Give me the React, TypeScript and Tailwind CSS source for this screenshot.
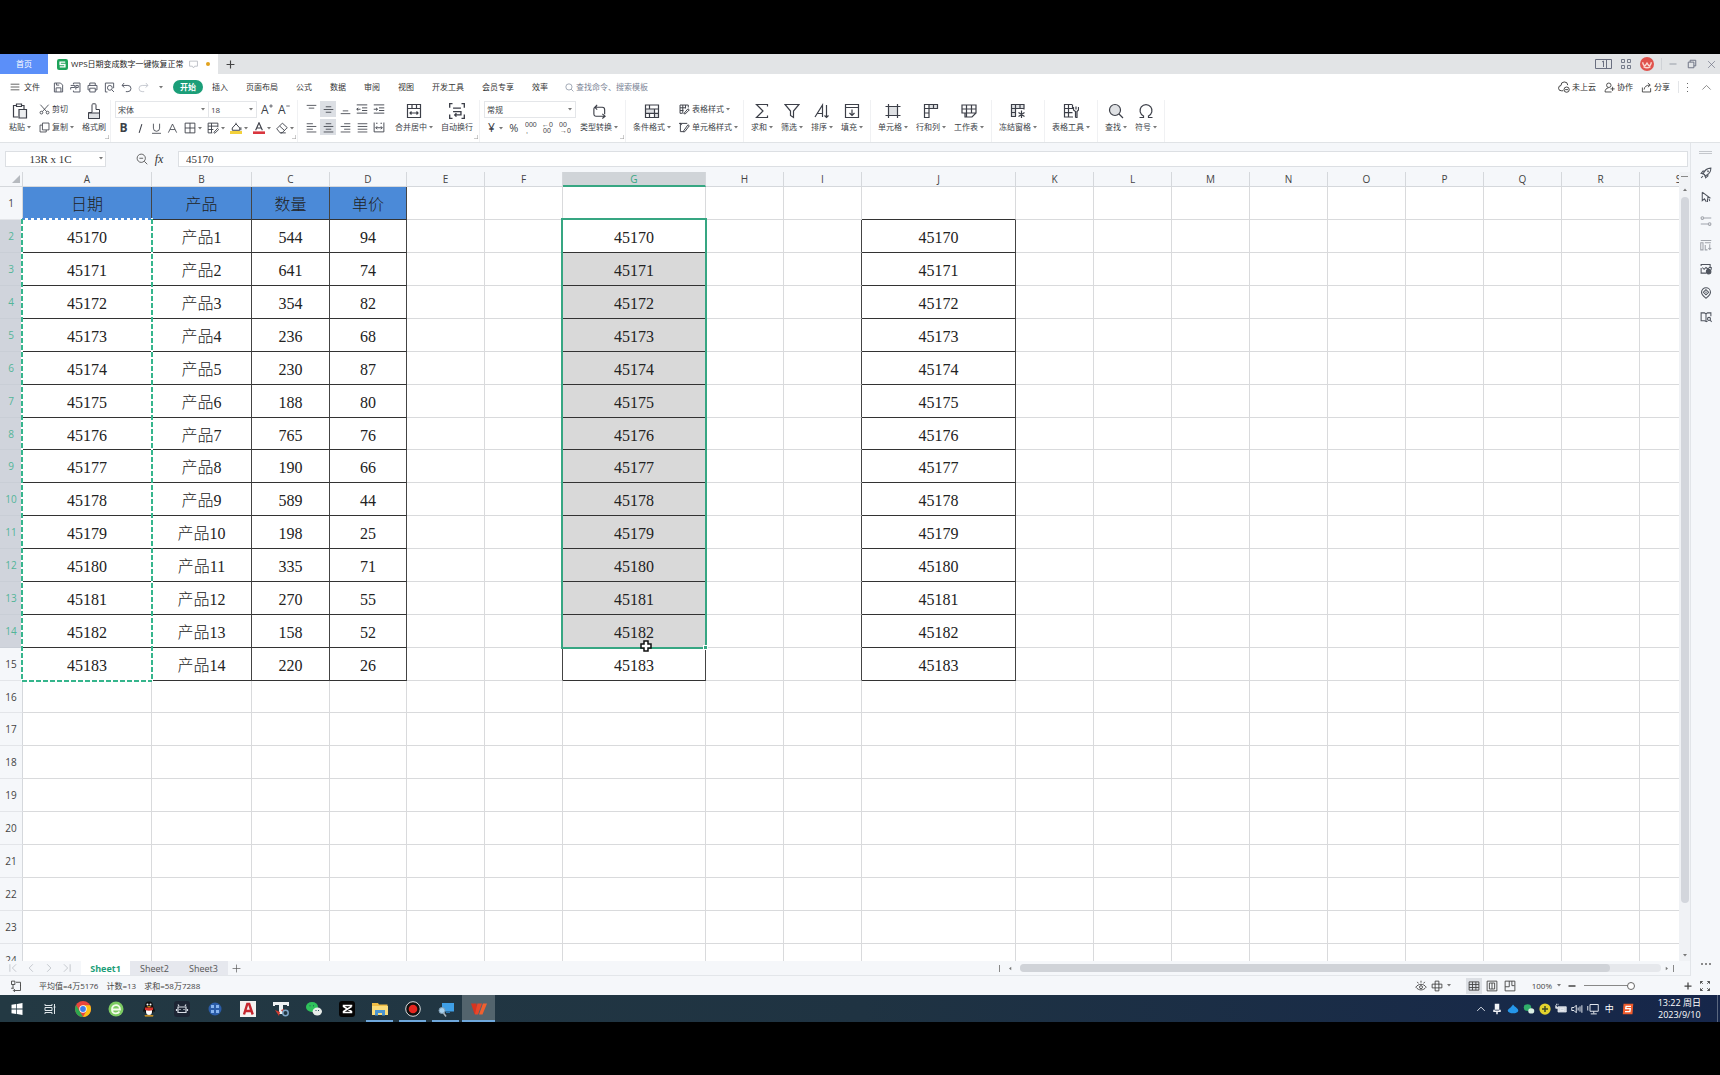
import { useState } from "react";
import type { ReactNode } from "react";

const ICONS: Record<string, string> = {
  menu: "M1 3.5h14M1 8h14M1 12.5h14",
  save: "M2 1.5h9l3 3v10H2zM4.5 14.5v-6h7v6M5 1.5v3h4",
  exportDoc: "M5 3.5V1.5h9.5v13H5v-2M1 5h6v3H1v3M8.500 11V5H12v3H8.500",
  print: "M4 5V1.5h8V5M4 11.5H1.5V5h13v6.5H12M4 9h8v5.5H4z",
  preview: "M5 14.5H2v-13h12V9M8.5 5a3.5 3.5 0 1 0 0 7 3.5 3.5 0 0 0 0-7M11 11l3.5 3.5",
  undo: "M4.500 1.500 1.500 5l3.500 3M1.500 5h8.500a4.500 4.500 0 0 1 0 9H7",
  redo: "M11.500 1.500 14.500 5 11 8M14.500 5H6a4.500 4.500 0 0 0 0 9h3",
  search: "M7 1.500a5.500 5.500 0 1 0 0 11 5.500 5.500 0 0 0 0-11M11 11l4 4",
  zoomOut: "M7 1.500a5.500 5.500 0 1 0 0 11 5.500 5.500 0 0 0 0-11M11 11l4 4M4.500 7h5",
  cut: "M2 1l9 10M14 1 5 11M3.500 10.500a2 2 0 1 0 0 4 2 2 0 0 0 0-4M12.500 10.500a2 2 0 1 0 0 4 2 2 0 0 0 0-4",
  copy: "M5 1.500h9.500v10H5zM5 4.500H1.500v10h9v-3",
  underline: "M3.500 1v6.500a4.500 4.500 0 0 0 9 0V1M1.500 15h13",
  letterA: "M2 14 8 1.500 14 14M4.500 9.500h7",
  italic: "M10 1.500 6 14.500",
  borders: "M1.500 1.500h13v13h-13zM8 1.500v13M1.500 8h13",
  cellStyle: "M14.500 7V1.500h-13v13H7M1.500 5.500h13M1.500 10h7M6 1.500v13M9 14l5-5.500 1.500 1.500-5 5z",
  alignTop: "M1 2h14M4 6h8",
  alignMid: "M4 4h8M1 8h14M4 12h8",
  alignBot: "M4 10h8M1 14h14",
  outdent: "M1 2.500h14M8 6.500h7M8 10h7M1 13.500h14M6 8.300H1M3 6.500 1 8.300l2 1.800",
  indent: "M1 2.500h14M8 6.500h7M8 10h7M1 13.500h14M1 8.300h5M4 6.500l2 1.800-2 1.800",
  left: "M1 2.500h9M1 6.500h14M1 10.500h9M1 14.500h14",
  center: "M4 2.500h8M1 6.500h14M4 10.500h8M1 14.500h14",
  right: "M6 2.500h9M1 6.500h14M6 10.500h9M1 14.500h14",
  justify: "M1 2.500h14M1 6.500h14M1 10.500h14M1 14.500h14",
  distribute: "M1.500 2v12.500h13V2M4 3h2M10 3h2M4 9h8M5.500 7 3.500 9l2 2M10.500 7l2 2-2 2",
  merge: "M1.500 1.500h13v13h-13zM1.500 5.500h13M6 1.500v4M10.500 1.500v4M4 10h8M5.500 8.500 4 10l1.500 1.500M10.500 8.500 12 10l-1.500 1.500",
  wrap: "M4 1.500H1.500V5M12 1.500h2.500V5M1.500 11v3.500H4M14.500 11v3.500H12M4.500 5.500h7M4.500 8.500h7v3H6M7.500 10 6 11.500 7.500 13",
  convert: "M2 4.500V11a2 2 0 0 0 2 2h9M5 2 2 4.500M3 3.500h8a2.500 2.500 0 0 1 2.500 2.500v5M11 10.500l3 2.500-3 2.500M5.500 1 3 3.500 5.500 6",
  condFmt: "M1.500 2h13v12.500h-13zM1.500 6h13M1.500 10.300h13M5.500 2v4M10.500 6v8.500M5.500 10.300v4.200",
  tableStyle: "M13.500 5V1.500h-12v12H5M1.500 5.500h8M1.500 9.500h5M5.500 1.500v12M9.500 1.500v5M7 14l6-7 2 1.500-6 6z",
  cellFmt: "M12 2H2v12h4M4 4.500 2 2M0 2h3M13 4l2 1.500L8.500 14 6.500 14.500 7 12.500z",
  sum: "M13.500 3.500V1.500h-11L9 8l-6.500 6.500h11v-2",
  filter: "M1 1.500h14L9.500 8v6.500l-3-2V8z",
  sort: "M1 14 8.500 2v12M3.500 10.500h5M12.500 2v12.500M10.500 12.500l2 2 2-2",
  fill: "M1.500 1.500h13v13h-13zM1.500 4.500h13M8 6.500v6M5.500 10 8 12.500l2.500-2.500",
  cells: "M3.500 1v14M12.500 1v14M.500 3.500h15M.500 12.500h15",
  rowsCols: "M1.500 1.500h13v4H6v9H1.500zM1.500 5.500H6M6 1.500v4M10.500 1.500v4M1.500 10H6",
  sheet: "M1 2h14v8l-4 4H4v-4H1zM1 6h14M5.500 2v12M10.500 2v8M4 10h11",
  freeze: "M14 6.500V1.500H1.500v12H6M1.500 5.500H14M1.500 9.500H6M5.500 1.500v12M10 1.500v4M11.500 7.500v7.500M8.500 9.500l6 4M14.500 9.500l-6 4",
  tools: "M9 1.500H1.500v12.500H10M1.500 5.500h9M1.500 9.700h8M5.500 1.500V14M9.500 1.500V6M10.500 4v3l2 1.500v6M12.500 14.500h1.500V8.500l1.500-1.500V4M13 3.500v3",
  omega: "M1.500 14.500h4v-1.500A6 6 0 1 1 10.500 13v1.500h4",
  rocket: "M6 10 4 9.500C6 4.500 9.500 1.500 14.500 1.500c0 5-3 8.500-8 10.500zM4.500 9 1.500 8.500 4 5.500h3M7 11.500 7.500 14.500l3-2.500V9M9.500 5.500h1.500V7M1.500 14.500 4 12",
  cursor: "M3 1.500v11.500l3-2.500L8.500 14.500M3 1.500l10 7.500H9.500M10 10v4.500M12 10.500l1 3",
  sliders: "M5.500 4H15M1 12h9.500M3.200 2.200a1.800 1.800 0 1 0 0 3.600 1.800 1.800 0 0 0 0-3.600M12.800 10.200a1.800 1.800 0 1 0 0 3.600 1.800 1.800 0 0 0 0-3.600",
  panel: "M1 2h14M1 5h3v9.500H1zM6.500 5h8M7 8v6.500h3M13 7v7M11 12l2 2 2-2",
  picTool: "M8 13.500H1.500V6.500M1.500 4V2h12v4M3 6l2.500 2.500L8 6l2.500 2 2-2h2.500v3",
  pin: "M8 1a6 6 0 0 1 6 6c0 3.500-3 5.500-6 8-3-2.500-6-4.500-6-8A6 6 0 0 1 8 1M8 3.500 4.500 7 8 10.500 11.500 7zM8 6v2",
  book: "M1.500 2.500H6l2 1.500v10l-2-1H1.500zM8 4l2-1.500h4.500V7M8 14h2M12 8.500a2 2 0 1 0 0 4 2 2 0 0 0 0-4M13.500 12l2 2.500",
  cloud: "M7 13H4.500A3.500 3.500 0 0 1 4 6a4.500 4.500 0 0 1 9-.500M11.500 8a3.500 3.500 0 1 0 0 7 3.500 3.500 0 0 0 0-7M9.500 11.500h4",
  person: "M7 1.500a3 3 0 1 0 0 6.500 3 3 0 0 0 0-6.500M1.500 14.500c0-3.500 2-5.500 5-6M1.500 14.500H11M12.500 7v6M9.500 10h6",
  share: "M2 8v6.500h12V9M4.500 11C5 7 7.500 4.500 13 4.500M10 1.500l3.500 3-3.500 3",
  up: "M2 11l6-6 6 6",
  first: "M3 2v12M13 2 7 8l6 6",
  prev: "M11 2 5 8l6 6",
  next: "M5 2l6 6-6 6",
  last: "M13 2v12M3 2l6 6-6 6",
  plus: "M8 1v14M1 8h14",
  minus: "M1 8h14",
  close: "M2 2l12 12M14 2 2 14",
  restore: "M2 5h9v9H2zM5 5V2h9v9h-3",
  refresh: "M8 3h6v5M14 7v7H5M6.500 12 4.500 14l2 2M2 1.500h4.500V6H2zM4 6v5M1.500 11H5",
  eye: "M1 9.500c4-5 10-5 14 0-4 5-10 5-14 0M8 7.500a2 2 0 1 0 0 4 2 2 0 0 0 0-4M8 1v2.500M3 2.500l1.500 2M13 2.500l-1.500 2",
  cross: "M5.500 1.500h5v13h-5zM1.500 5.500h13v5h-13z",
  gridView: "M1.500 2.500h13v11h-13zM1.500 6h13M1.500 10h13M6 2.500v11M10.500 2.500v11",
  pageView: "M1.500 1.500h13v13h-13zM4.500 4h7v8h-7zM8 4v8",
  readView: "M1.500 1.500h13v13h-13zM7 1.500V9H1.500M10.500 1.500v6H14",
  full: "M2 5V2h3M2 2l3 3M11 2h3v3M14 2l-3 3M2 11v3h3M2 14l3-3M14 11v3h-3M14 14l-3-3",
  apps: "M2 2h4v4H2zM10 2h4v4h-4zM2 10h4v4H2zM10 10h4v4h-4z",
};

function Icon({ name, className = "size-[14px]", w = 1.2, children }: { name: string; className?: string; w?: number; children?: ReactNode }) {
  return (
    <svg viewBox="0 0 16 16" className={`shrink-0 ${className}`} fill="none" stroke="currentColor" strokeWidth={w} aria-hidden="true">
      {children}
      <path d={ICONS[name]} />
    </svg>
  );
}

function Caret({ className = "" }: { className?: string }) {
  return (
    <svg viewBox="0 0 4 3" className={`h-[3px] w-1 shrink-0 text-[#777] ${className}`} aria-hidden="true">
      <path d="M0 0h4L2 2.500z" fill="currentColor" />
    </svg>
  );
}

function Big({ label, caret = true, children }: { label: string; caret?: boolean; children: ReactNode }) {
  return (
    <button className="flex shrink-0 flex-col items-center gap-[2px] pt-[2px]">
      <span className="flex h-4 items-center">{children}</span>
      <span className="flex items-center gap-[2px] leading-3">
        {label}
        {caret && <Caret />}
      </span>
    </button>
  );
}

function Small({ label, caret = false, children }: { label: string; caret?: boolean; children: ReactNode }) {
  return (
    <button className="flex h-4 items-center gap-[2px]">
      {children}
      <span>{label}</span>
      {caret && <Caret />}
    </button>
  );
}

function Tool({ label, on = false, children }: { label: string; on?: boolean; children: ReactNode }) {
  return (
    <button aria-label={label} className={`flex size-4 items-center justify-center ${on ? "bg-[#dcdfe4]" : ""}`}>
      {children}
    </button>
  );
}

function Group({ children, corner = false, className = "gap-2 px-[7px]" }: { children: ReactNode; corner?: boolean; className?: string }) {
  return (
    <div className={`relative flex shrink-0 items-start border-r border-[#f0f1f3] pt-px ${className}`}>
      {children}
      {corner && (
        <svg viewBox="0 0 4 4" className="absolute bottom-[3px] right-px size-1 text-[#999]" aria-hidden="true">
          <path d="M4 0v4H0" fill="none" stroke="currentColor" />
        </svg>
      )}
    </div>
  );
}

const tabs = ["插入", "页面布局", "公式", "数据", "审阅", "视图", "开发工具", "会员专享", "效率"];

function TitleBar() {
  return (
    <header className="flex h-5 shrink-0 items-stretch bg-[#e2e4e6]">
      <button className="w-12 bg-[#5b8ff9] text-white">首页</button>
      <div className="flex items-center bg-white pl-[9px] pr-2">
        <svg viewBox="0 0 16 16" className="mr-[3px] size-[11px]" aria-hidden="true">
          <rect width="16" height="16" rx="3" fill="#1ea35a" />
          <path d="M12 4.500H4.500V8h7v3.500H4" fill="none" stroke="#fff" strokeWidth="2" />
        </svg>
        <span className="text-[#222]">WPS日期变成数字一键恢复正常</span>
        <svg viewBox="0 0 16 16" className="ml-[5px] size-[9px] text-[#b5b9c0]" fill="none" stroke="currentColor" strokeWidth="1.5" aria-hidden="true">
          <path d="M1 2h14v9h-5l-2 3-2-3H1z" />
        </svg>
        <span className="ml-2 size-1 rounded-full bg-[#e2a21d]" />
      </div>
      <button aria-label="新建标签" className="ml-2 flex items-center text-[#444]">
        <Icon name="plus" className="size-[9px]" w={2} />
      </button>
      <div className="ml-auto flex items-center pr-1 text-[#6a6f80]">
        <svg viewBox="0 0 17 10" className="h-[10px] w-[17px]" fill="none" stroke="currentColor" aria-hidden="true">
          <path d="M.5.5h16v9H.5zM11.500.5v9M7 3l1.500-1v6" />
        </svg>
        <Icon name="apps" className="ml-2 size-3" />
        <svg viewBox="0 0 16 16" className="ml-2 size-[14px]" aria-hidden="true">
          <circle cx="8" cy="8" r="8" fill="#e0524c" />
          <path d="M3 6c1 5 3 5 5 1 2 4 4 4 5-1M4 11c3 2 5 2 8 0" fill="none" stroke="#fbd9d2" strokeWidth="1.500" />
        </svg>
        <span className="mx-[7px] h-3 w-px bg-[#cfd2d6]" />
        <button aria-label="最小化"><Icon name="minus" className="size-2" /></button>
        <button aria-label="还原" className="ml-[10px]"><Icon name="restore" className="size-[10px]" w={1.5} /></button>
        <button aria-label="关闭" className="ml-[10px]"><Icon name="close" className="size-[9px]" /></button>
      </div>
    </header>
  );
}

function MenuBar() {
  return (
    <nav className="flex h-[26px] shrink-0 items-center bg-white text-[#333]">
      <button className="ml-[10px] flex items-center gap-1">
        <Icon name="menu" className="size-[10px]" />
        文件
      </button>
      <div className="ml-[13px] flex items-center gap-[6px] text-[#555a66]">
        {[["save", "保存"], ["exportDoc", "输出为PDF"], ["print", "打印"], ["preview", "打印预览"], ["undo", "撤销"]].map(([n, l]) => (
          <button key={n} aria-label={l}><Icon name={n} className="size-[11px]" w={1.4} /></button>
        ))}
        <button aria-label="恢复" className="text-[#c5c8cf]"><Icon name="redo" className="size-[11px]" w={1.4} /></button>
        <Caret className="ml-1" />
      </div>
      <button className="ml-[10px] h-[14px] w-[30px] rounded-full bg-[#1b9e78] font-bold text-white">开始</button>
      <div className="ml-[9px] flex gap-[18px]">
        {tabs.map((t) => (
          <button key={t}>{t}</button>
        ))}
      </div>
      <label className="ml-[17px] flex items-center gap-[2px] text-[#7b8496]">
        <Icon name="search" className="size-[9px]" />
        <input aria-label="搜索" placeholder="查找命令、搜索模板" className="w-20 outline-none placeholder:text-[#7b8496]" />
      </label>
      <div className="ml-auto flex items-center gap-2 pr-2">
        <Small label="未上云"><Icon name="cloud" className="size-3" /></Small>
        <Small label="协作"><Icon name="person" className="size-[11px]" /></Small>
        <Small label="分享"><Icon name="share" className="size-[11px]" /></Small>
        <span className="h-3 w-px bg-[#e3e5e8]" />
        <svg viewBox="0 0 2 9" className="h-[9px] w-[2px]" fill="#666" aria-hidden="true">
          <path d="M0 0h1v1H0zM0 4h1v1H0zM0 8h1v1H0z" />
        </svg>
        <button aria-label="收起功能区" className="ml-1 text-[#777]"><Icon name="up" className="size-[11px]" /></button>
      </div>
    </nav>
  );
}

function Picker({ label, value, className }: { label: string; value: string; className: string }) {
  return (
    <div className={`relative h-[17px] border border-[#e4e6e9] ${className}`}>
      <select aria-label={label} className="block size-full appearance-none bg-white pl-[2px] outline-none">
        <option>{value}</option>
      </select>
      <Caret className="absolute right-[3px] top-[6px]" />
    </div>
  );
}

function Decimal({ top, bottom }: { top: string; bottom: string }) {
  return (
    <svg viewBox="0 0 12 12" className="size-3" fontSize="7" fontFamily="Liberation Sans" fill="#444" aria-hidden="true">
      <text x="0" y="5">{top}</text>
      <text x="1" y="11">{bottom}</text>
    </svg>
  );
}

function Ribbon() {
  return (
    <div className="flex h-[43px] shrink-0 overflow-hidden border-b border-[#e0e3e6] bg-white text-[#3c3f48]">
      <Group corner className="gap-2 pl-[9px] pr-1">
        <Big label="粘贴">
          <svg viewBox="0 0 16 16" className="size-4" fill="none" stroke="currentColor" strokeWidth="1.200" aria-hidden="true">
            <path d="M6 14H1.500V2.500h3M10 2.500h2V6M4.500 1h5v2.500h-5z" />
            <path d="M7 6.500h7.500v8.500H7z" fill="#eceef0" />
          </svg>
        </Big>
        <div className="flex flex-col gap-[2px]">
          <Small label="剪切"><Icon name="cut" className="size-[11px]" /></Small>
          <Small label="复制" caret><Icon name="copy" className="size-[11px]" /></Small>
        </div>
        <Big label="格式刷" caret={false}>
          <svg viewBox="0 0 16 16" className="size-4" fill="none" stroke="currentColor" aria-hidden="true">
            <path d="M2.500 10h11v5.500h-11z" fill="#dfe1e4" />
            <path d="M6 9.500v-8c0-1 4-1 4 0v5h3.500v9h-11V9.500H6" />
          </svg>
        </Big>
      </Group>
      <Group corner className="pl-1 pr-[3px]">
        <div className="flex flex-col gap-[2px]">
          <div className="flex items-center">
            <Picker label="字体" value="宋体" className="w-[94px]" />
            <Picker label="字号" value="18" className="w-12 border-l-0" />
            <div className="ml-1 flex gap-1 text-[12px] leading-4">
              <button aria-label="增大字号" className="flex w-[13px] items-center">
                A<Icon name="plus" className="mb-2 size-1" w={3} />
              </button>
              <button aria-label="减小字号" className="flex w-[13px] items-center">
                A<Icon name="minus" className="mb-2 size-1" w={3} />
              </button>
            </div>
          </div>
          <div className="flex h-4 items-center">
            <button className="w-[17px] text-[12px] font-bold">B</button>
            <Tool label="倾斜"><Icon name="italic" className="size-[11px]" w={1.5} /></Tool>
            <Tool label="下划线"><Icon name="underline" className="size-[11px]" /></Tool>
            <Tool label="删除线"><Icon name="letterA" className="size-[11px]" /></Tool>
            <div className="ml-1 flex gap-[5px]">
              <button aria-label="边框" className="flex items-center gap-[2px]"><Icon name="borders" className="size-3" /><Caret /></button>
              <button aria-label="单元格样式" className="flex items-center gap-[2px]"><Icon name="cellStyle" className="size-3" /><Caret /></button>
              <button aria-label="填充颜色" className="flex items-center gap-[2px]">
                <svg viewBox="0 0 16 16" className="size-3" fill="none" stroke="currentColor" strokeWidth="1.300" aria-hidden="true">
                  <path d="M3 8 8 2.500 13 8v3H3zM8 2.500V1M14.500 7v4" />
                  <path d="M0 12h16v4H0z" fill="#f3d13b" stroke="none" />
                </svg>
                <Caret />
              </button>
              <button aria-label="字体颜色" className="flex items-center gap-[2px]">
                <svg viewBox="0 0 16 16" className="size-3" fill="none" stroke="currentColor" strokeWidth="1.500" aria-hidden="true">
                  <path d="M3.500 11 8 1l4.500 10M5 8h6" />
                  <path d="M0 12.500h16V16H0z" fill="#d9363e" stroke="none" />
                </svg>
                <Caret />
              </button>
              <button aria-label="清除" className="flex items-center gap-[2px]">
                <svg viewBox="0 0 16 16" className="size-3" fill="none" stroke="currentColor" strokeWidth="1.200" aria-hidden="true">
                  <path d="M1 9 8.500 1.500 15 7.500 8 14.500H5.500zM5 5.500l6.500 6M6 14.500h7" />
                </svg>
                <Caret />
              </button>
            </div>
          </div>
        </div>
      </Group>
      <Group corner className="gap-2 pl-[5px] pr-[6px]">
        <div className="grid grid-cols-5 gap-x-px gap-y-[2px]">
          <Tool label="顶端对齐"><Icon name="alignTop" className="size-[11px]" /></Tool>
          <Tool label="垂直居中" on><Icon name="alignMid" className="size-[11px]" /></Tool>
          <Tool label="底端对齐"><Icon name="alignBot" className="size-[11px]" /></Tool>
          <Tool label="减少缩进"><Icon name="outdent" className="size-3" /></Tool>
          <Tool label="增加缩进"><Icon name="indent" className="size-3" /></Tool>
          <Tool label="左对齐"><Icon name="left" className="size-[11px]" /></Tool>
          <Tool label="水平居中" on><Icon name="center" className="size-[11px]" /></Tool>
          <Tool label="右对齐"><Icon name="right" className="size-[11px]" /></Tool>
          <Tool label="两端对齐"><Icon name="justify" className="size-[11px]" /></Tool>
          <Tool label="分散对齐"><Icon name="distribute" className="size-3" /></Tool>
        </div>
        <Big label="合并居中"><Icon name="merge" className="size-4" /></Big>
        <Big label="自动换行" caret={false}><Icon name="wrap" className="size-[18px]" /></Big>
      </Group>
      <Group corner className="gap-1 pl-1 pr-[7px]">
        <div className="flex flex-col gap-[2px]">
          <Picker label="数字格式" value="常规" className="w-[92px]" />
          <div className="flex h-4 items-center gap-[5px] pl-1">
            <button className="flex items-center gap-1 text-[12px]">¥<Caret /></button>
            <button className="w-3 text-[11px]">%</button>
            <button aria-label="千位分隔"><Decimal top="000" bottom=" ," /></button>
            <button aria-label="增加小数位"><Decimal top="←0" bottom="00" /></button>
            <button aria-label="减少小数位"><Decimal top="00" bottom="→0" /></button>
          </div>
        </div>
        <Big label="类型转换"><Icon name="convert" className="size-[15px]" /></Big>
      </Group>
      <Group className="gap-2 pl-[7px] pr-[5px]">
        <Big label="条件格式">
          <Icon name="condFmt" className="size-4"><path d="M1.500 6h9v4.300h-9zM10.500 10.300h4v4.200h-4z" fill="#dfe1e4" stroke="none" /></Icon>
        </Big>
        <div className="flex flex-col gap-[2px]">
          <Small label="表格样式" caret><Icon name="tableStyle" className="size-[11px]" w={1.4} /></Small>
          <Small label="单元格样式" caret><Icon name="cellFmt" className="size-[11px]" w={1.4} /></Small>
        </div>
      </Group>
      <Group>
        <Big label="求和"><Icon name="sum" className="size-4" /></Big>
        <Big label="筛选"><Icon name="filter" className="size-4" /></Big>
        <Big label="排序"><Icon name="sort" className="size-4" /></Big>
        <Big label="填充"><Icon name="fill" className="size-4" /></Big>
      </Group>
      <Group>
        <Big label="单元格"><Icon name="cells" className="size-4"><path d="M3.500 3.500h9v9h-9z" fill="#dfe1e4" stroke="none" /></Icon></Big>
        <Big label="行和列"><Icon name="rowsCols" className="size-4"><path d="M6 1.500h8.500v4H6z" fill="#dfe1e4" stroke="none" /></Icon></Big>
        <Big label="工作表"><Icon name="sheet" className="size-4" /></Big>
      </Group>
      <Group>
        <Big label="冻结窗格"><Icon name="freeze" className="size-4"><path d="M1.500 1.500H14v4H5.500v8h-4z" fill="#dfe1e4" stroke="none" /></Icon></Big>
      </Group>
      <Group>
        <Big label="表格工具"><Icon name="tools" className="size-4" /></Big>
      </Group>
      <Group>
        <Big label="查找"><Icon name="search" className="size-4"><circle cx="7" cy="7" r="5" fill="#dfe1e4" stroke="none" /></Icon></Big>
        <Big label="符号"><Icon name="omega" className="size-4" /></Big>
      </Group>
    </div>
  );
}

function FormulaBar() {
  return (
    <div className="flex shrink-0 items-center pb-[5px] pr-[2px] pt-2 font-['Liberation_Serif',serif] text-[11px] text-[#333]">
      <div className="relative ml-[5px] h-4 w-[101px] border border-[#dcdfe3] bg-white">
        <input aria-label="名称框" defaultValue="13R x 1C" className="block h-full w-full pr-[10px] text-center outline-none" />
        <Caret className="absolute right-[2px] top-[5px]" />
      </div>
      <Icon name="zoomOut" className="ml-[30px] size-3 text-[#555]" />
      <span className="mr-2 w-[22px] text-center text-[12px] leading-4 italic">fx</span>
      <input aria-label="编辑栏" defaultValue="45170" className="h-4 min-w-0 flex-1 border border-[#dcdfe3] bg-white pl-[7px] outline-none" />
    </div>
  );
}

const columns = [
  ["A", "w-[129px]"], ["B", "w-[100px]"], ["C", "w-[78px]"], ["D", "w-[77px]"], ["E", "w-[78px]"],
  ["F", "w-[78px]"], ["G", "w-[143px]"], ["H", "w-[78px]"], ["I", "w-[78px]"], ["J", "w-[154px]"],
  ["K", "w-[78px]"], ["L", "w-[78px]"], ["M", "w-[78px]"], ["N", "w-[78px]"], ["O", "w-[78px]"],
  ["P", "w-[78px]"], ["Q", "w-[78px]"], ["R", "w-[78px]"], ["S", "w-[78px]"],
];

const qty = [544, 641, 354, 236, 230, 188, 765, 190, 589, 198, 335, 270, 158, 220];
const price = [94, 74, 82, 68, 87, 80, 76, 66, 44, 25, 71, 55, 52, 26];
const titles: Record<string, string> = { A: "日期", B: "产品", C: "数量", D: "单价" };

function cellText(col: string, row: number) {
  if (row === 1) return titles[col] ?? "";
  if (row > 15) return "";
  const i = row - 2;
  if (col === "A" || col === "G" || col === "J") return String(45170 + i);
  if (col === "B") return `产品${i + 1}`;
  if (col === "C") return String(qty[i]);
  if (col === "D") return String(price[i]);
  return "";
}

function cellClass(col: string, row: number) {
  const inTable = "ABCD".includes(col);
  const body = row >= 2 && row <= 15;
  const darkRight = (inTable && row <= 15) || ("FGIJ".includes(col) && body);
  const darkBottom = row <= 15 && (inTable || col === "G" || col === "J");
  let bg = "bg-white";
  if (row === 1 && inTable) bg = "bg-[#4b8ad8]";
  if (col === "G" && row >= 3 && row <= 14) bg = "bg-[#d9d9d9]";
  return `${bg} ${darkRight ? "border-r-[#444]" : "border-r-[#d9dadc]"} ${darkBottom ? "border-b-[#333]" : "border-b-[#d9dadc]"}`;
}

// moving border round the copied range A2:A15
function Marching() {
  return (
    <svg className="pointer-events-none absolute -left-px -top-px z-10 h-[462px] w-[calc(100%+2px)] overflow-visible" aria-hidden="true">
      <rect width="100%" height="100%" fill="none" stroke="#fff" strokeWidth="2" />
      <line x1="0" y1="0" x2="100%" y2="0" stroke="#4b8ad8" strokeWidth="2" strokeDasharray="3 3" />
      <line x1="0" y1="0" x2="0" y2="100%" stroke="#35b58c" strokeWidth="2" strokeDasharray="5 2" />
      <line x1="100%" y1="0" x2="100%" y2="100%" stroke="#35b58c" strokeWidth="2" strokeDasharray="5 2" />
      <line x1="0" y1="100%" x2="100%" y2="100%" stroke="#35b58c" strokeWidth="2" strokeDasharray="5 2" />
    </svg>
  );
}

function Selection() {
  return (
    <div className="pointer-events-none absolute -left-[2px] -top-[2px] z-10 h-[431px] w-[calc(100%+4px)] border-2 border-[#36a682]">
      <span className="absolute -bottom-[3px] -right-[3px] size-[5px] border border-white bg-[#36a682]" />
      <svg viewBox="0 0 12 12" className="absolute -bottom-[5px] left-[77px] size-3" aria-hidden="true">
        <path d="M4 1h4v3h3v4H8v3H4V8H1V4h3z" fill="#fff" stroke="#111" strokeWidth="1.500" />
      </svg>
    </div>
  );
}

function Grid() {
  const rows = Array.from({ length: 24 }, (_, i) => i + 1);
  return (
    <div className="min-w-0 flex-1 overflow-hidden">
      <table className="w-full table-fixed border-separate border-spacing-0 text-center">
        <thead>
          <tr className="h-[15px]">
            <th className="w-[23px] border-b border-r border-[#d5d8dc] p-0">
              <svg viewBox="0 0 8 8" className="ml-auto mr-[2px] size-2" aria-hidden="true">
                <path d="M8 0v8H0z" fill="#b6babf" />
              </svg>
            </th>
            {columns.map(([c, w]) => (
              <th
                key={c}
                className={`${w} border-r border-r-[#d5d8dc] p-0 text-[10px] leading-3 font-normal ${
                  c === "G" ? "border-b-2 border-b-[#36a682] bg-[#d0d4d8] text-[#36a682]" : "border-b border-b-[#d5d8dc] text-[#444]"
                }`}
              >
                {c}
              </th>
            ))}
          </tr>
        </thead>
        <tbody>
          {rows.map((r) => (
            <tr key={r} className={r % 8 === 0 ? "h-8" : "h-[33px]"}>
              <th
                className={`border-b border-r p-0 text-[10px] leading-3 font-normal ${
                  r >= 2 && r <= 14
                    ? "border-b-[#c9ced6] border-r-[#36a682] bg-[#d0d4dc] text-[#53b598]"
                    : "border-b-[#e3e5e9] border-r-[#d5d8dc] text-[#444]"
                }`}
              >
                {r}
              </th>
              {columns.map(([c]) => (
                <td
                  key={c}
                  className={`relative border-b border-r p-0 pt-1 font-['Liberation_Serif','Noto_Sans_CJK_SC',serif] text-[16px] leading-5 font-light text-[#222] ${cellClass(c, r)}`}
                >
                  {cellText(c, r)}
                  {c === "A" && r === 2 && <Marching />}
                  {c === "G" && r === 2 && <Selection />}
                </td>
              ))}
            </tr>
          ))}
        </tbody>
      </table>
    </div>
  );
}

function VScroll() {
  return (
    <div className="flex w-[11px] shrink-0 flex-col items-center bg-[#f0f2f5]">
      <span className="mt-1 h-px w-[7px] bg-[#888]" />
      <Caret className="mt-[11px] rotate-180" />
      <div className="mt-[6px] w-2 flex-1 rounded-full bg-[#d3d6dc]" />
      <Caret className="mb-1 mt-[51px]" />
    </div>
  );
}

function SheetBar() {
  const [active, setActive] = useState("Sheet1");
  return (
    <div className="flex h-[15px] shrink-0 items-center border-b border-[#e3e6ea] text-[9px]">
      <div className="flex w-[81px] items-center gap-2 pl-2 text-[#b4b8bf]">
        {["first", "prev", "next", "last"].map((n) => (
          <button key={n} aria-label={n}><Icon name={n} className="size-[10px]" /></button>
        ))}
      </div>
      {["Sheet1", "Sheet2", "Sheet3"].map((s) => (
        <button
          key={s}
          onClick={() => setActive(s)}
          className={`h-full w-[49px] pt-px leading-3 ${s === active ? "bg-white font-bold text-[#1b9e78]" : "bg-[#e6e8ee] text-[#555]"}`}
        >
          {s}
        </button>
      ))}
      <button aria-label="新建工作表" className="ml-1 text-[#555]"><Icon name="plus" className="size-[9px]" /></button>
      <div className="ml-auto flex w-[41%] items-center pl-[2px] pr-4">
        <span className="h-[7px] w-px bg-[#888]" />
        <Caret className="mx-2 rotate-90" />
        <div className="flex h-2 flex-1 items-center rounded-full bg-[#e6e8ec]">
          <div className="h-full w-[92%] rounded-full bg-[#d0d3d8]" />
        </div>
        <Caret className="mx-1 -rotate-90" />
        <span className="h-[7px] w-px bg-[#888]" />
      </div>
    </div>
  );
}

function SideBar() {
  const items = [["rocket", "工具"], ["cursor", "选择"], ["sliders", "属性"], ["panel", "透视表"], ["picTool", "图片"], ["pin", "定位"], ["book", "帮助"]];
  return (
    <aside className="flex w-[30px] shrink-0 flex-col items-center border-l border-[#e2e5e9] text-[#50555f]">
      <span className="mt-2 h-[3px] w-[13px] border-y border-[#c4c7cc]" />
      <div className="mt-[13px] flex flex-col gap-3">
        {items.map(([n, l]) => (
          <button key={n} aria-label={l} className={n === "sliders" || n === "panel" ? "text-[#a0a4ab]" : ""}>
            <Icon name={n} className="size-3" w={1.4}>
              {n === "picTool" && <circle cx="11.500" cy="11.500" r="3" fill="currentColor" />}
            </Icon>
          </button>
        ))}
      </div>
      <button aria-label="更多" className="mb-[11px] mt-auto flex gap-[2px]">
        <i className="size-[2px] rounded-full bg-[#666]" />
        <i className="size-[2px] rounded-full bg-[#666]" />
        <i className="size-[2px] rounded-full bg-[#666]" />
      </button>
    </aside>
  );
}

function StatusBar() {
  return (
    <footer className="flex h-[19px] shrink-0 items-center text-[#444]">
      <Icon name="refresh" className="ml-[10px] mr-[17px] size-3" />
      <div className="flex gap-2">
        <span>平均值=4万5176</span>
        <span>计数=13</span>
        <span>求和=58万7288</span>
      </div>
      <div className="ml-auto flex items-center pr-[9px]">
        <Icon name="eye" className="size-3" />
        <button aria-label="阅读模式" className="ml-1 flex items-center gap-1"><Icon name="cross" className="size-3" /><Caret /></button>
        <button aria-label="普通视图" className="ml-[15px] bg-[#dcdfe4] p-[2px]"><Icon name="gridView" className="size-3" /></button>
        <button aria-label="分页预览" className="ml-1"><Icon name="pageView" className="size-3" /></button>
        <button aria-label="页面布局" className="ml-[6px]"><Icon name="readView" className="size-3" /></button>
        <button className="ml-4 flex items-center gap-[5px]">100%<Caret /></button>
        <button aria-label="缩小" className="ml-[7px]"><Icon name="minus" className="size-2" w={3} /></button>
        <input
          type="range"
          aria-label="缩放"
          defaultValue={50}
          className="ml-2 h-2 w-[94px] appearance-none bg-[linear-gradient(#888,#888)] bg-[length:50%_1px] bg-left bg-no-repeat [&::-webkit-slider-thumb]:size-2 [&::-webkit-slider-thumb]:appearance-none [&::-webkit-slider-thumb]:rounded-full [&::-webkit-slider-thumb]:border [&::-webkit-slider-thumb]:border-[#666] [&::-webkit-slider-thumb]:bg-white"
        />
        <button aria-label="放大" className="ml-[6px]"><Icon name="plus" className="size-2" w={2.5} /></button>
        <button aria-label="全屏" className="ml-[7px]"><Icon name="full" className="size-3" /></button>
      </div>
    </footer>
  );
}

const apps: { label: string; open?: boolean; active?: boolean; art: ReactNode }[] = [
  { label: "开始", art: <path d="M2.500 3.700 7.300 3v4.600H2.500zM8 2.900l5.500-.8v5.500H8zM2.500 8.400h4.800V13l-4.800-.7zM8 8.400h5.500v5.500L8 13.100z" fill="#fff" /> },
  { label: "任务视图", art: <path d="M3 3v1.500h7V3M3 13v-1.500h7V13M3 6.500h7v3H3zM12.500 3v10M11.500 6h2" fill="none" stroke="#dfe6ea" /> },
  {
    label: "Chrome",
    art: (
      <>
        <circle cx="8" cy="8" r="8" fill="#e8453c" />
        <path d="M1.100 4 8 16A8 8 0 0 1 1.100 4z" fill="#2da94f" />
        <path d="M8 4.300h7.100A8 8 0 0 1 8 16l3.300-6z" fill="#fbc116" />
        <circle cx="8" cy="8" r="3.700" fill="#fff" />
        <circle cx="8" cy="8" r="2.900" fill="#3b7ded" />
      </>
    ),
  },
  {
    label: "浏览器",
    art: (
      <>
        <circle cx="8" cy="8" r="7.500" fill="#7ccb62" />
        <path d="M4 8.500h8C12 2.500 4 3 4 8.500c0 5 6 4.500 7.500 2" fill="none" stroke="#f2fbe9" strokeWidth="1.800" />
      </>
    ),
  },
  {
    label: "QQ",
    art: (
      <>
        <path d="M8 .5c-3 0-4 2-4 4.500C3 7 2 9 2 11l1.500-1C4 15 12 15 12.500 10l1.500 1c0-2-1-4-2-6 0-2.500-1-4.500-4-4.500z" fill="#111" />
        <ellipse cx="8" cy="10.500" rx="3" ry="3.500" fill="#fff" />
        <path d="M3.800 6.500h8.400L12 9c-3 1-5 1-8 0z" fill="#d8332c" />
        <circle cx="6.500" cy="3.500" r="1" fill="#fff" /><circle cx="9.500" cy="3.500" r="1" fill="#fff" />
        <path d="M5.500 5.300h5L8 6.500zM3.500 14.200h9L12 15.500H4z" fill="#f2a71b" />
      </>
    ),
  },
  {
    label: "剪辑",
    art: (
      <>
        <rect width="16" height="16" rx="3" fill="#1d2534" />
        <path d="M5 5 4 3.500M11 5l1-1.500M4 6h8v5.500H4zM6 8v1M10 8v1M2.500 8v2M13.500 8v2" fill="none" stroke="#d9dee6" strokeWidth="1.200" />
      </>
    ),
  },
  {
    label: "远程",
    art: (
      <>
        <circle cx="8" cy="8" r="6.500" fill="#2a5ca8" />
        <path d="M4 4h3v3H4zM9 4h3v3H9zM4 9h3v3H4zM9 9h3v3H9z" fill="#86b4ef" />
      </>
    ),
  },
  {
    label: "AutoCAD",
    art: (
      <>
        <path d="M0 0h16v16H0z" fill="#f4f1f0" />
        <path d="M4 13.500 7.300 3h1.900l3.500 10.500M5 10h6.500" fill="none" stroke="#c4262e" strokeWidth="2.400" />
      </>
    ),
  },
  {
    label: "天正",
    art: (
      <>
        <path d="M0 1h16v4h-2V4h-4v9H6V4H2v1H0z" fill="#eef1f3" />
        <path d="M2 9l5 2-1 4z" fill="#cf3a2f" /><path d="M8 9l3-1-1 4z" fill="#cf3a2f" />
        <circle cx="12.500" cy="12" r="2.700" fill="none" stroke="#7fa6c8" strokeWidth="1.500" />
      </>
    ),
  },
  {
    label: "微信",
    art: (
      <>
        <ellipse cx="6" cy="6" rx="6" ry="5" fill="#2fc25b" />
        <ellipse cx="11.300" cy="10.500" rx="4.700" ry="4" fill="#e7ece9" />
        <path d="M3.500 4.800h1M7 4.800h1M9.500 9.500h1M12 9.500h1" stroke="#24505a" />
      </>
    ),
  },
  {
    label: "剪映",
    art: (
      <>
        <rect width="16" height="16" rx="3" fill="#050505" />
        <path d="M12.500 5.500V4.500h-8v1l8 5v1h-8v-1l8-5" fill="none" stroke="#fff" strokeWidth="1.500" />
      </>
    ),
  },
  {
    label: "文件资源管理器",
    open: true,
    art: (
      <>
        <path d="M0 2h6l1 1.500h8.500V14H0z" fill="#f0bd45" />
        <path d="M0 5h16v9H0z" fill="#fbdc7a" />
        <path d="M3 9h10v5.500h-3V12H6v2.500H3z" fill="#4a94cf" />
      </>
    ),
  },
  {
    label: "录屏",
    open: true,
    art: (
      <>
        <circle cx="8" cy="8" r="7.300" fill="#111" stroke="#d8dcdf" />
        <circle cx="8" cy="8" r="4.300" fill="#e5261f" />
      </>
    ),
  },
  {
    label: "放大镜",
    open: true,
    art: (
      <>
        <path d="M4 2h12v8.500H4z" fill="#3f9fe6" /><path d="M8 10.500h4V12H8z" fill="#2b74ad" />
        <circle cx="4" cy="9.500" r="3" fill="#a9d2ee" stroke="#7e9bb0" /><path d="M5.500 12 8 15.500" stroke="#a8b4bd" strokeWidth="1.500" />
      </>
    ),
  },
  {
    label: "WPS",
    open: true,
    active: true,
    art: (
      <>
        <path d="M0 2.500h5.500l1 10.500H3.500z" fill="#d8341f" />
        <path d="M6.500 2.500H11L7 13.500H3.800z" fill="#e8472a" />
        <path d="M12 2.500h4l-4.500 11H8z" fill="#f0602f" />
      </>
    ),
  },
];

const tray: ReactNode[] = [
  <path d="M3 10.500 8 5.500l5 5" fill="none" stroke="#dfe4ec" strokeWidth="1.300" />,
  <path d="M5 1h6v9H5zM3 9v3h10V9M7 12h2v3H7z" fill="#f2f4f7" />,
  <path d="M8 2c3 4 7 5 7 8 0 5-14 5-14 0 0-2 4-3 7-8z" fill="#2597ea" />,
  <g><ellipse cx="6" cy="6" rx="5" ry="4.500" fill="#2fae6a" /><ellipse cx="11" cy="10.500" rx="4" ry="3.500" fill="#dbeee3" /></g>,
  <g><circle cx="8" cy="8" r="7.500" fill="#e3d32d" /><path d="M8 4v8M4 8h8" stroke="#3d4a24" strokeWidth="2" /></g>,
  <path d="M4 5h11v7H4zM1 3v4h4M2 1v2M4 1v2M7 7h5v3H7z" fill="#cdd3dc" stroke="#eef1f5" />,
  <path d="M1 6h3l3-3v10l-3-3H1zM9.500 6v4M12 4.500v7M14.500 3v10" fill="none" stroke="#e6eaf0" strokeWidth="1.300" />,
  <path d="M4 2h11v9H4zM9 11v3M5 14.500h8M1 4v6" fill="none" stroke="#e6eaf0" strokeWidth="1.300" />,
];

function TaskBar() {
  return (
    <div className="flex h-[27px] shrink-0 items-stretch bg-linear-to-r from-[#233943] via-[#1f3342] to-[#16264a] text-white">
      {apps.map((a) => (
        <button
          key={a.label}
          aria-label={a.label}
          className={`relative flex w-[33px] items-center justify-center ${a.active ? "bg-[#53646d]" : ""}`}
        >
          <svg viewBox="0 0 16 16" className="size-4">{a.art}</svg>
          {a.open && <span className={`absolute bottom-0 h-[2px] bg-[#6fa8dc] ${a.active ? "inset-x-0" : "inset-x-[3px]"}`} />}
        </button>
      ))}
      <div className="ml-auto flex items-center">
        {tray.map((t, i) => (
          <svg key={i} viewBox="0 0 16 16" className="mx-[2px] size-3" aria-hidden="true">{t}</svg>
        ))}
        <span className="mx-1 text-[9px]">中</span>
        <svg viewBox="0 0 16 16" className="ml-1 size-3" aria-hidden="true">
          <path d="M2 1h13l-1 14H1z" fill="#ef5b2c" />
          <path d="M12 4.500H5.500L5 7.500h6l-.5 4H4" fill="none" stroke="#fff" strokeWidth="1.800" />
        </svg>
      </div>
      <div className="ml-6 flex flex-col justify-center text-center text-[9px] leading-3">
        <span>13:22 周日</span>
        <span>2023/9/10</span>
      </div>
      <span className="ml-4 mr-[2px] w-px bg-[#5b6880]" />
    </div>
  );
}

export default function App() {
  return (
    <div className="flex h-screen flex-col overflow-hidden bg-black pb-[53px] pt-[54px] font-['Open_Sans','Noto_Sans_CJK_SC',sans-serif] text-[8px] leading-3">
      <TitleBar />
      <MenuBar />
      <Ribbon />
      <div className="flex min-h-0 flex-1 bg-[#f5f7fa]">
        <div className="flex min-w-0 flex-1 flex-col">
          <FormulaBar />
          <main className="flex min-h-0 flex-1">
            <Grid />
            <VScroll />
          </main>
          <SheetBar />
        </div>
        <SideBar />
      </div>
      <div className="flex shrink-0 flex-col bg-[#f5f7fa]">
        <StatusBar />
        <TaskBar />
      </div>
    </div>
  );
}
